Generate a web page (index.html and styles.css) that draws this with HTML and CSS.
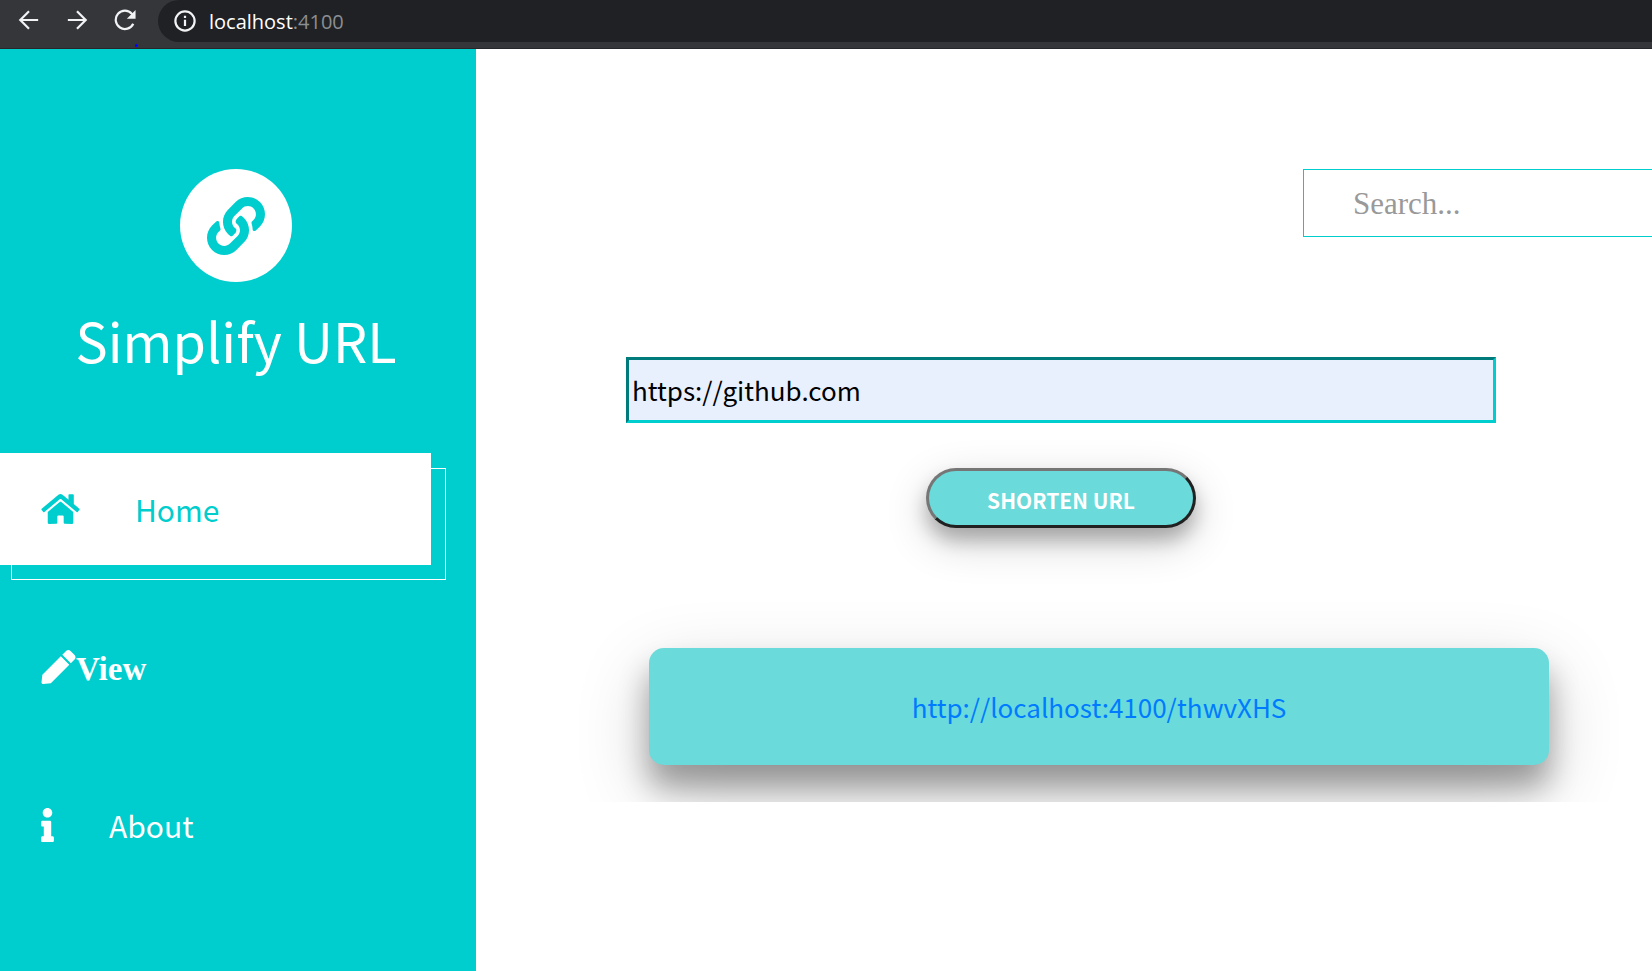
FILE: index.html
```html
<!DOCTYPE html>
<html lang="en">
<head>
<meta charset="utf-8">
<title>Simplify URL</title>
<link rel="stylesheet" href="styles.css">
</head>
<body>
<header class="toolbar">
  <button class="tool" type="button" aria-label="Back"><svg viewBox="0 0 24 24"><path d="M22 12H3M12 2.500 2.500 12 12 21.500"/></svg></button>
  <button class="tool" type="button" aria-label="Forward"><svg viewBox="0 0 24 24"><path d="M2 12H21M12 2.500 21.500 12 12 21.500"/></svg></button>
  <button class="tool tool-reload" type="button" aria-label="Reload"><svg viewBox="0 0 24 24"><path d="M21 16A10 10 0 1 1 19.500 5.300L22 8"/><path class="solid" d="M23.500 1V10.500H14z"/></svg><span class="dot"></span></button>
  <div class="address">
    <svg class="address-icon" viewBox="0 0 24 24"><circle cx="12" cy="12" r="10.500"/><path d="M12 10.500V17.500M12 6.200V8.600"/></svg>
    <span class="host">localhost<span class="port">:4100</span></span>
  </div>
</header>
<div class="page">
  <aside class="sidebar">
    <div class="brand">
      <div class="logo"><svg viewBox="0 0 512 512"><path d="M326.612 185.391c59.747 59.809 58.927 155.698.36 214.590-.11.12-.24.25-.36.37l-67.200 67.200c-59.270 59.270-155.699 59.262-214.960 0-59.270-59.260-59.270-155.700 0-214.960l37.106-37.106c9.840-9.840 26.786-3.300 27.294 10.606.648 17.722 3.826 35.527 9.690 52.721 1.986 5.822.567 12.262-3.783 16.612l-13.087 13.087c-28.026 28.026-28.905 73.660-1.155 101.960 28.024 28.579 74.086 28.749 102.325.51l67.200-67.190c28.191-28.191 28.073-73.757 0-101.830-3.701-3.694-7.429-6.564-10.341-8.569a16.037 16.037 0 0 1-6.947-12.606c-.396-10.567 3.348-21.456 11.698-29.806l21.054-21.055c5.521-5.521 14.182-6.199 20.584-1.731a152.482 152.482 0 0 1 20.522 17.197zM467.547 44.449c-59.261-59.262-155.690-59.270-214.960 0l-67.200 67.200c-.12.12-.25.25-.36.37-58.566 58.892-59.387 154.781.36 214.590a152.454 152.454 0 0 0 20.521 17.196c6.402 4.468 15.064 3.789 20.584-1.731l21.054-21.055c8.350-8.350 12.094-19.239 11.698-29.806a16.037 16.037 0 0 0-6.947-12.606c-2.912-2.005-6.640-4.875-10.341-8.569-28.073-28.073-28.191-73.639 0-101.830l67.200-67.190c28.239-28.239 74.300-28.069 102.325.51 27.750 28.300 26.872 73.934-1.155 101.960l-13.087 13.087c-4.350 4.350-5.769 10.790-3.783 16.612 5.864 17.194 9.042 34.999 9.690 52.721.509 13.906 17.454 20.446 27.294 10.606l37.106-37.106c59.271-59.259 59.271-155.699.001-214.959z"/></svg></div>
      <h1 class="brand-name">Simplify URL</h1>
    </div>
    <nav class="nav">
      <a class="nav-item nav-active" href="#home"><svg viewBox="0 0 576 512" class="icon-home"><path d="M280.370 148.260L96 300.110V464a16 16 0 0 0 16 16l112.060-.29a16 16 0 0 0 15.920-16V368a16 16 0 0 1 16-16h64a16 16 0 0 1 16 16v95.640a16 16 0 0 0 16 16.050L464 480a16 16 0 0 0 16-16V300L295.670 148.260a12.190 12.190 0 0 0-15.300 0zM571.600 251.470L488 182.560V44.050a12 12 0 0 0-12-12h-56a12 12 0 0 0-12 12v72.610L318.470 43a48 48 0 0 0-61 0L4.340 251.470a12 12 0 0 0-1.600 16.900l25.500 31A12 12 0 0 0 45.150 301l235.220-193.740a12.190 12.190 0 0 1 15.300 0L530.900 301a12 12 0 0 0 16.900-1.600l25.500-31a12 12 0 0 0-1.700-16.930z"/></svg><span class="nav-label">Home</span></a>
      <a class="nav-item" href="#view"><svg viewBox="0 0 512 512" class="icon-pen"><path d="M290.740 93.240l128.020 128.020-277.990 277.990-114.140 12.600C11.350 513.540-1.560 500.620.14 485.340l12.700-114.220 277.900-277.880zm207.200-19.060l-60.110-60.110c-18.750-18.750-49.160-18.750-67.910 0l-56.550 56.550 128.020 128.020 56.550-56.550c18.750-18.760 18.750-49.160 0-67.910z"/></svg><span class="nav-title">View</span></a>
      <a class="nav-item" href="#about"><svg viewBox="0 0 192 512" class="icon-info"><path d="M20 424.229h20V279.771H20c-11.046 0-20-8.954-20-20V212c0-11.046 8.954-20 20-20h112c11.046 0 20 8.954 20 20v212.229h20c11.046 0 20 8.954 20 20V492c0 11.046-8.954 20-20 20H20c-11.046 0-20-8.954-20-20v-47.771c0-11.046 8.954-20 20-20zM96 0C56.235 0 24 32.235 24 72s32.235 72 72 72 72-32.235 72-72S135.764 0 96 0z"/></svg><span class="nav-label">About</span></a>
    </nav>
  </aside>
  <main class="main">
    <input class="search" type="search" placeholder="Search..." aria-label="Search">
    <form class="form">
      <input class="url" type="text" value="https://github.com" aria-label="URL">
      <button class="submit" type="button">SHORTEN URL</button>
    </form>
    <section class="result">
      <div class="card"><a class="short-link" href="#thwvXHS">http://localhost:4100/thwvXHS</a></div>
    </section>
  </main>
</div>
</body>
</html>
```
FILE: styles.css
```css
*, *::before { box-sizing: border-box; }

body {
  margin: 0;
  min-height: 100vh;
  display: flex;
  flex-direction: column;
  overflow-x: hidden;
  background: #fff;
  font-family: "Noto Sans CJK JP", "Noto Sans", sans-serif;
}

a { text-decoration: none; }

.toolbar {
  display: flex;
  align-items: flex-start;
  height: 49px;
  padding-left: 18px;
  background: #35363a;
  border-bottom: 1px solid #26272b;
}

.tool {
  position: relative;
  width: 22px;
  height: 22px;
  margin: 9px 26px 0 0;
  padding: 0;
  border: 0;
  background: none;
}

.tool svg, .address-icon {
  display: block;
  width: 22px;
  height: 22px;
  fill: none;
  stroke: #f1f3f4;
  stroke-width: 2.400;
}

.tool .solid { fill: #f1f3f4; stroke: none; }

.tool-reload { margin-right: 22px; }

.dot {
  position: absolute;
  left: 21px;
  top: 35px;
  width: 3px;
  height: 3px;
  border-radius: 50%;
  background: #00f;
}

.address {
  flex: 1;
  display: flex;
  align-items: center;
  gap: 13px;
  height: 42px;
  padding-left: 16px;
  border-radius: 21px 0 0 21px;
  background: #202124;
}

.host {
  font-family: "Open Sans", sans-serif;
  font-size: 20px;
  color: #fff;
}

.port { color: #8b8e92; }

.page { flex: 1; display: flex; }

.sidebar {
  flex: 0 0 476px;
  padding-top: 120px;
  background: #00cdcd;
}

.brand {
  display: flex;
  flex-direction: column;
  align-items: center;
  padding-right: 4px;
}

.logo {
  display: flex;
  align-items: center;
  justify-content: center;
  width: 112px;
  height: 113px;
  border-radius: 50%;
  background: #fff;
}

.logo svg { width: 58px; height: 58px; fill: #00cdcd; }

.brand-name {
  margin: 18px 0 73px;
  font-size: 54px;
  font-weight: 400;
  line-height: 80px;
  color: #fff;
}

.nav { display: flex; flex-direction: column; gap: 46px; }

.nav-item {
  position: relative;
  display: flex;
  align-items: center;
  width: 431px;
  height: 112px;
  padding-left: 41px;
  color: #fff;
}

.nav-item svg { height: 34px; fill: currentColor; }

.icon-home { width: 39px; }
.icon-pen { width: 35px; }
.icon-info { width: 13px; }

.nav-active { background: #fff; color: #00cdcd; }

.nav-active::before {
  content: "";
  position: absolute;
  left: 11px;
  top: 15px;
  width: 435px;
  height: 112px;
  border: 1px solid #fff;
}

.nav-label {
  margin-left: 55px;
  font-size: 30px;
  line-height: 44px;
}

.nav-title {
  padding-top: 4px;
  font: bold 33px "Liberation Serif", serif;
}

.main {
  flex: 1;
  min-width: 0;
  display: flex;
  flex-direction: column;
  padding-top: 120px;
}

.search {
  align-self: flex-end;
  width: 349px;
  height: 68px;
  padding: 2px 0 0 49px;
  border: 1px solid #00cdcd;
  border-right: 0;
  border-radius: 0;
  outline: 0;
  background: #fff;
  font: 31px "Liberation Serif", serif;
}

.search::placeholder { color: #999; }

.form {
  display: flex;
  flex-direction: column;
  align-items: center;
  margin: 120px 156px 0 150px;
}

.url {
  width: 100%;
  height: 66px;
  padding: 0 3px 2px;
  border: 3px solid;
  border-color: #007b7b #00cdcd #00cdcd #007b7b;
  border-radius: 0;
  background: #e8f0fe;
  font: 26px "Noto Sans CJK JP", sans-serif;
  color: #000;
}

.submit {
  width: 270px;
  height: 60px;
  margin-top: 45px;
  padding: 4px 0 0;
  border: 3px solid;
  border-color: #767676 #212121 #212121 #767676;
  border-radius: 30px;
  background: #6adada;
  box-shadow: 0 12px 18px rgba(0, 0, 0, .24), 0 14px 44px rgba(0, 0, 0, .19);
  font: bold 21px/30px "Noto Sans CJK JP", sans-serif;
  color: #fff;
}

/* Clips the lower part of the card shadow */
.result {
  overflow: hidden;
  margin-top: 52px;
  padding: 68px 103px 37px 173px;
}

.card {
  display: flex;
  align-items: center;
  justify-content: center;
  height: 117px;
  border-radius: 15px;
  background: #6adada;
  box-shadow: 0 22px 30px rgba(0, 0, 0, .32), 0 26px 75px rgba(0, 0, 0, .19);
}

.short-link { font-size: 26px; line-height: 38px; color: #007bff; }
```
